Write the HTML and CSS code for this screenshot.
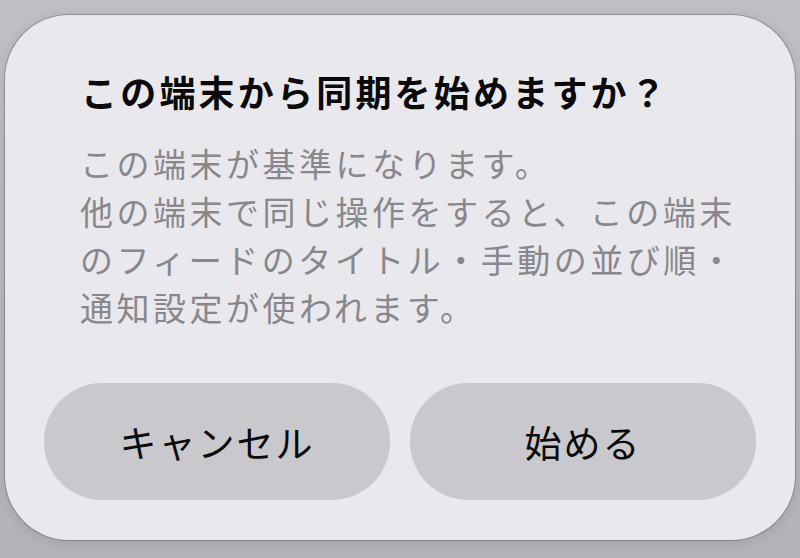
FILE: index.html
```html
<!DOCTYPE html>
<html lang="ja">
<head>
<meta charset="utf-8">
<link rel="stylesheet" href="styles.css">
</head>
<body>
<div class="dialog">
  <h1 class="title">この端末から同期を始めますか？</h1>
  <p class="message">この端末が基準になります。<br>他の端末で同じ操作をすると、この端末<br>のフィードのタイトル・手動の並び順・<br>通知設定が使われます。</p>
  <div class="actions">
    <button class="btn">キャンセル</button>
    <button class="btn">始める</button>
  </div>
</div>
</body>
</html>
```
FILE: styles.css
```css
html, body {
  margin: 0;
  padding: 0;
  width: 800px;
  height: 558px;
  overflow: hidden;
}
body {
  background: linear-gradient(180deg, #c0c0c4 0%, #b9b9bd 60%, #b4b4b8 100%);
  font-family: "Noto Sans CJK JP", "Noto Sans", sans-serif;
  padding: 15px 5px 0;
  box-sizing: border-box;
}
.dialog {
  box-sizing: border-box;
  height: 525px;
  background: #e9e8ed;
  border-radius: 64px;
  box-shadow: 0 0 0 1px rgba(0,0,0,0.22), 0 2px 14px rgba(0,0,0,0.12);
  padding: 0 39px 40px;
  display: flex;
  flex-direction: column;
}
.title {
  margin: 51px 0 0 37px;
  font-size: 36px;
  line-height: 50px;
  font-weight: 700;
  color: #0a0a0a;
  letter-spacing: 3.2px;
}
.message {
  margin: 23px 0 0 36px;
  font-size: 33px;
  line-height: 48px;
  color: #88878c;
  letter-spacing: 3.5px;
  font-weight: 400;
}
.actions {
  margin-top: auto;
  display: flex;
  gap: 20px;
}
.btn {
  flex: 1;
  height: 117px;
  border: none;
  border-radius: 58px;
  background: #c9c8cd;
  font-family: inherit;
  font-size: 37px;
  font-weight: 400;
  color: #0a0a0a;
  letter-spacing: 2px;
  padding: 0;
}
```
